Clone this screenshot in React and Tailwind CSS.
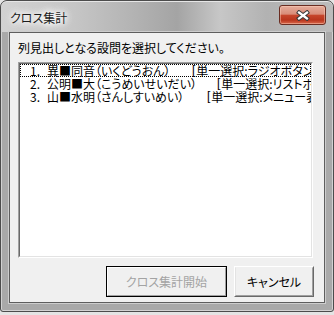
export default function App() {
  const rows = [
    { n: "1.", name: "異■同音（いくどうおん）", w: "w-[162px]", tag: "単一選択:ラジオボタン]", focus: true },
    { n: "2.", name: "公明■大（こうめいせいだい）", w: "w-[187px]", tag: "単一選択:リストボックス]" },
    { n: "3.", name: "山■水明（さんしすいめい）", w: "w-[177px]", tag: "単一選択:メニュー表示]" },
  ];
  return (
    <div className="antialiased w-[334px] h-[315px] bg-[#e4e4e4] font-['Noto_Sans_CJK_JP','Noto_Sans',sans-serif] [font-feature-settings:'palt']">
      <div className="w-[334px] h-[312px] rounded-t-[7px] rounded-b-[3px] border border-[#4c4c4c] bg-[#a9a9a9] shadow-[inset_0_0_0_1px_#d2d2d2] flex flex-col overflow-hidden">
        {/* title bar */}
        <div className="h-[31px] shrink-0 flex items-start rounded-t-[6px] border-t border-t-[#e6e6e6] bg-[linear-gradient(90deg,#d2d2d2_0%,#c6c6c6_22%,#b3b3b3_40%,#a4a4a4_53%,#c7c7c7_66%,#b2b2b2_80%,#bcbcbc_100%)]">
          <div className="pl-[9px] pt-[9px] text-[12px] leading-[14px] text-[#1c1c1c] [text-shadow:0_0_8px_#fff,0_0_8px_#fff,0_0_12px_#fff,0_0_4px_#fff]">
            クロス集計
          </div>
          <div className="ml-auto mr-[7px] mt-[3px] w-[47px] h-[20px] rounded-[3px] border border-[#6a2d22] bg-[linear-gradient(180deg,#e6ad9c_0%,#d98c78_45%,#c6452b_52%,#b9351d_78%,#d9694c_100%)] shadow-[inset_0_0_0_1px_rgba(255,210,190,0.45)] flex items-center justify-center">
            <svg width="14" height="11" viewBox="0 0 14 11">
              <path d="M3 2.5 L11 8.5 M11 2.5 L3 8.5" stroke="#3b3b3b" strokeWidth="4.2" strokeLinecap="square" fill="none" />
              <path d="M3 2.5 L11 8.5 M11 2.5 L3 8.5" stroke="#ffffff" strokeWidth="2.2" strokeLinecap="square" fill="none" />
            </svg>
          </div>
        </div>
        {/* client */}
        <div className="mx-[8px] h-[271px] shrink-0 border border-[#5e5e5e] bg-[#f0f0f0] shadow-[0_0_0_1px_#cdcdcd] flex flex-col">
          <div className="ml-[8px] mt-[8px] text-[12px] leading-[14px] text-black whitespace-nowrap">
            列見出しとなる設問を選択してください。
          </div>
          <div className="ml-[8px] mt-[7px] w-[295px] h-[196px] border border-t-[#a0a0a0] border-l-[#a0a0a0] border-r-white border-b-white">
            <div className="h-full border border-t-[#696969] border-l-[#696969] border-r-[#e3e3e3] border-b-[#e3e3e3] bg-white overflow-hidden">
              {rows.map((r) => (
                <div
                  key={r.n}
                  className={
                    "h-[13px] flex items-center whitespace-nowrap pl-[10px] text-[12px] leading-[13px] text-black " +
                    (r.focus ? "outline-1 outline-dotted outline-black -outline-offset-1" : "")
                  }
                >
                  <span className={"shrink-0 flex " + r.w}>
                    <span className="w-[17px] shrink-0">{r.n}</span>
                    <span>{r.name}</span>
                  </span>
                  <span className="shrink-0 flex text-black">
                    <span className="font-['Liberation_Sans',sans-serif] mr-[1px]">[</span>
                    <span>{r.tag}</span>
                  </span>
                </div>
              ))}
            </div>
          </div>
          <div className="mt-[8px] flex justify-end gap-[7px] pr-[10px]">
            <div className="w-[121px] h-[31px] border border-black">
              <div className="h-full border border-t-white border-l-white border-r-[#a0a0a0] border-b-[#a0a0a0] flex items-center justify-center text-[12px] text-[#a3a3a3]">
                クロス集計開始
              </div>
            </div>
            <div className="w-[80px] h-[31px] border border-t-white border-l-white border-r-[#696969] border-b-[#696969]">
              <div className="h-full border border-t-[#f0f0f0] border-l-[#e3e3e3] border-r-[#a0a0a0] border-b-[#a0a0a0] flex items-center justify-center text-[12px] text-black">
                キャンセル
              </div>
            </div>
          </div>
        </div>
      </div>
    </div>
  );
}
